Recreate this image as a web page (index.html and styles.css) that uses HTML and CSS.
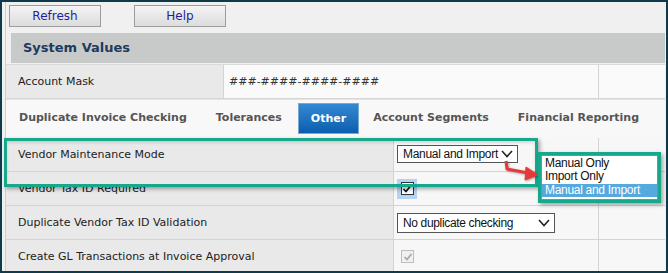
FILE: index.html
```html
<!DOCTYPE html>
<html>
<head>
<meta charset="utf-8">
<link rel="stylesheet" href="styles.css">
</head>
<body>
<div class="frame">
  <div class="inner">
    <div class="toolbar">
      <button class="btn">Refresh</button>
      <button class="btn">Help</button>
    </div>
    <div class="section-head">System Values</div>
    <div class="mask-row">
      <div class="cell label">Account Mask</div>
      <div class="cell value mask">###-####-####-####</div>
      <div class="cell extra"></div>
    </div>
    <div class="tabs">
      <span class="tab">Duplicate Invoice Checking</span>
      <span class="tab">Tolerances</span>
      <span class="tab active">Other</span>
      <span class="tab">Account Segments</span>
      <span class="tab">Financial Reporting</span>
    </div>
    <div class="row">
      <div class="cell label">Vendor Maintenance Mode</div>
      <div class="cell value">
        <div class="select sel-mode"><span>Manual and Import</span><svg class="chev" width="12" height="8" viewBox="0 0 12 8"><path d="M1 1 L6 6.5 L11 1" fill="none" stroke="#222" stroke-width="1.6"/></svg></div>
      </div>
      <div class="cell extra"></div>
    </div>
    <div class="row">
      <div class="cell label">Vendor Tax ID Required</div>
      <div class="cell value">
        <span class="cb-focus"><span class="cb"><svg width="10" height="10" viewBox="0 0 10 10"><path d="M1.5 5 L4 7.5 L8.5 2" fill="none" stroke="#111" stroke-width="1.7"/></svg></span></span>
      </div>
      <div class="cell extra"></div>
    </div>
    <div class="row">
      <div class="cell label">Duplicate Vendor Tax ID Validation</div>
      <div class="cell value">
        <div class="select sel-dup"><span>No duplicate checking</span><svg class="chev" width="12" height="8" viewBox="0 0 12 8"><path d="M1 1 L6 6.5 L11 1" fill="none" stroke="#222" stroke-width="1.6"/></svg></div>
      </div>
      <div class="cell extra"></div>
    </div>
    <div class="row">
      <div class="cell label">Create GL Transactions at Invoice Approval</div>
      <div class="cell value">
        <span class="cb disabled"><svg width="10" height="10" viewBox="0 0 10 10"><path d="M1.5 5 L4 7.5 L8.5 2" fill="none" stroke="#a8a8a8" stroke-width="1.7"/></svg></span>
      </div>
      <div class="cell extra"></div>
    </div>
  </div>

  <div class="hl hl-row"></div>
  <svg class="arrow" width="45" height="26" viewBox="0 0 45 26">
    <g fill="#e8383a" stroke="#e8383a">
      <polyline points="5,2 6,10 27,14" fill="none" stroke-width="3" stroke-linejoin="round"/>
      <polygon points="25,8 37,16 24,21" stroke-width="1"/>
    </g>
  </svg>
  <div class="hl hl-list">
    <div class="listbox">
      <div class="opt">Manual Only</div>
      <div class="opt">Import Only</div>
      <div class="opt sel">Manual and Import</div>
    </div>
  </div>
</div>
</body>
</html>
```
FILE: styles.css
```css
* { box-sizing: border-box; }
html, body { margin: 0; padding: 0; }
body { font-family: "DejaVu Sans", Verdana, sans-serif; font-size: 11px; color: #222; background: #fff; }

.frame {
  position: relative;
  width: 668px;
  height: 273px;
  border: 2px solid #0f3a4b;
  background: #f0f0f0;
  overflow: hidden;
}
.inner {
  margin-left: 3px;
  margin-right: 1px;
  border-left: 1px solid #cfcfcf;
  height: 100%;
}

.toolbar {
  height: 31px;
  padding: 3px 0 0 3px;
  display: flex;
  gap: 33px;
}
.btn {
  width: 92px;
  height: 22px;
  border: 1px solid #9c9c9c;
  background: linear-gradient(#f4f4f4, #dcdcdc);
  color: #1f1f9a;
  font-family: "DejaVu Sans", Verdana, sans-serif;
  font-size: 12px;
  padding: 0;
}

.section-head {
  margin-left: 5px;
  height: 30px;
  background: #c8cac9;
  color: #1d3a5e;
  font-weight: bold;
  font-size: 13px;
  line-height: 30px;
  padding-left: 12px;
  margin-bottom: 1px;
}

.mask-row, .row {
  display: grid;
  background: #e9e9e9;
}
.mask-row {
  grid-template-columns: 217px 375px 1fr;
  height: 35px;
  border-top: 1px solid #dadada;
  border-bottom: 1px solid #d6d6d6;
}
.row {
  grid-template-columns: 387px 205px 1fr;
  height: 34px;
  border-bottom: 1px solid #d4d4d4;
}
.cell {
  display: flex;
  align-items: center;
}
.cell.label { padding-left: 12px; background: #e9e9e9; }
.cell.value { border-left: 1px solid #d4d4d4; background: #f7f7f7; padding-left: 3px; }
.cell.extra { border-left: 1px solid #d4d4d4; background: #f7f7f7; }
.mask-row .cell.value, .mask-row .cell.extra { background: #fafafa; }
.mask-row .cell.value { padding-left: 5px; }
.mask { color: #333; }

.tabs {
  height: 39px;
  background: #f8f8f8;
  border-top: 1px solid #e4e4e4;
  display: flex;
  align-items: center;
  padding-bottom: 1px;
}
.tab {
  font-weight: bold;
  color: #555;
  padding: 0 15px 0 13px;
  height: 31px;
  line-height: 30px;
  margin-right: 1px;
}
.tab.active {
  color: #fff;
  background: linear-gradient(#3489d2, #0b5ead);
  border: 1px solid #7aa7d0;
  padding: 0 12px;
  line-height: 29px;
}

.select {
  background: #fff;
  border: 1px solid #555;
  display: flex;
  align-items: center;
  justify-content: space-between;
  font-family: "Liberation Sans", Arial, sans-serif;
  font-size: 12px;
  letter-spacing: -0.3px;
  color: #111;
  padding: 0 4px 0 5px;
}
.sel-mode { width: 121px; height: 18px; margin-top: -1px; }
.sel-dup { width: 158px; height: 20px; letter-spacing: -0.35px; }
.chev { flex: none; }

.cb-focus {
  width: 20px;
  height: 20px;
  background: #b3d4f3;
  display: flex;
  align-items: center;
  justify-content: center;
}
.cb {
  width: 13px;
  height: 13px;
  border: 1px solid #333;
  background: #fff;
  display: flex;
  align-items: center;
  justify-content: center;
}
.cb.disabled {
  border-color: #bdbdbd;
  background: #f0f0f0;
  margin-left: 4px;
}

.hl {
  position: absolute;
  border: 3px solid #17a78b;
  box-shadow: 2px 2px 4px rgba(0,0,0,0.35), inset 0 2px 3px rgba(0,0,0,0.12);
}
.hl-row {
  left: 2px;
  top: 136px;
  width: 534px;
  height: 49px;
}
.arrow {
  position: absolute;
  left: 499px;
  top: 157px;
  filter: drop-shadow(1px 1px 1px rgba(0,0,0,0.35));
}
.hl-list {
  left: 536px;
  top: 150px;
  width: 123px;
  height: 51px;
  background: #fff;
}
.listbox {
  height: 100%;
  border: 1px solid #8a8a8a;
  background: #fff;
  padding-top: 1px;
  font-family: "Liberation Sans", Arial, sans-serif;
  font-size: 12px;
  letter-spacing: -0.3px;
  color: #111;
}
.opt {
  height: 13px;
  line-height: 13px;
  padding-left: 3px;
}
.opt.sel {
  background: #55a9dd;
  color: #fff;
  margin-top: 1px;
}
```
